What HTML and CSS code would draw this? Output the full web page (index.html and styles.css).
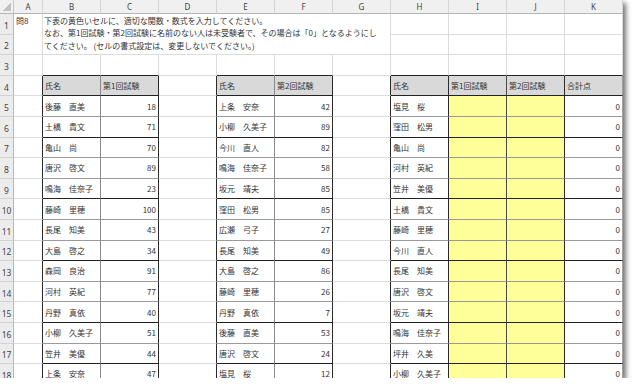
FILE: index.html
```html
<!DOCTYPE html>
<html lang="ja">
<head>
<meta charset="utf-8">
<title>問8</title>
<link rel="stylesheet" href="styles.css">
</head>
<body>
<div class="frame">
<table class="sheet">
<colgroup>
<col class="c-rh"><col class="c-a"><col class="c-std" span="10">
</colgroup>
<thead>
<tr class="r-head">
<th class="corner"></th><th class="ch">A</th><th class="ch">B</th><th class="ch">C</th><th class="ch">D</th><th class="ch">E</th><th class="ch">F</th><th class="ch">G</th><th class="ch">H</th><th class="ch">I</th><th class="ch">J</th><th class="ch">K</th>
</tr>
</thead>
<tbody>
<tr>
<th class="rh">1</th>
<td rowspan="2" class="top">問8</td>
<td colspan="6" rowspan="2" class="top note">下表の黄色いセルに、適切な関数・数式を入力してください。<br>なお、第1回試験・第2回試験に名前のない人は未受験者で、その場合は「0」となるようにし<br>てください。 (セルの書式設定は、変更しないでください。)</td>
<td></td><td></td><td></td><td></td>
</tr>
<tr>
<th class="rh">2</th>
<td></td><td></td><td></td><td></td>
</tr>
<tr>
<th class="rh">3</th>
<td></td><td class="hb"></td><td class="hb"></td><td></td><td class="hb"></td><td class="hb"></td><td></td><td class="hb"></td><td class="hb"></td><td class="hb"></td><td class="hb"></td>
</tr>
<tr class="thick">
<th class="rh">4</th>
<td class="edge"></td><td class="hd in">氏名</td><td class="hd out">第1回試験</td>
<td class="edge"></td><td class="hd in">氏名</td><td class="hd out">第2回試験</td>
<td class="edge"></td><td class="hd out">氏名</td><td class="hd mid">第1回試験</td><td class="hd out">第2回試験</td><td class="hd last">合計点</td>
</tr>
<tr class="thin">
<th class="rh">5</th>
<td class="edge"></td><td class="in">後藤　直美</td><td class="out num">18</td>
<td class="edge"></td><td class="in">上条　安奈</td><td class="out num">42</td>
<td class="edge"></td><td class="out">塩見　桜</td><td class="mid yl"></td><td class="out yl"></td><td class="last num">0</td>
</tr>
<tr class="thick">
<th class="rh">6</th>
<td class="edge"></td><td class="in">土橋　貴文</td><td class="out num">71</td>
<td class="edge"></td><td class="in">小柳　久美子</td><td class="out num">89</td>
<td class="edge"></td><td class="out">窪田　松男</td><td class="mid yl"></td><td class="out yl"></td><td class="last num">0</td>
</tr>
<tr class="thin">
<th class="rh">7</th>
<td class="edge"></td><td class="in">亀山　尚</td><td class="out num">70</td>
<td class="edge"></td><td class="in">今川　直人</td><td class="out num">82</td>
<td class="edge"></td><td class="out">亀山　尚</td><td class="mid yl"></td><td class="out yl"></td><td class="last num">0</td>
</tr>
<tr class="thin">
<th class="rh">8</th>
<td class="edge"></td><td class="in">唐沢　啓文</td><td class="out num">89</td>
<td class="edge"></td><td class="in">鳴海　佳奈子</td><td class="out num">58</td>
<td class="edge"></td><td class="out">河村　英紀</td><td class="mid yl"></td><td class="out yl"></td><td class="last num">0</td>
</tr>
<tr class="thick">
<th class="rh">9</th>
<td class="edge"></td><td class="in">鳴海　佳奈子</td><td class="out num">23</td>
<td class="edge"></td><td class="in">坂元　靖夫</td><td class="out num">85</td>
<td class="edge"></td><td class="out">笠井　美優</td><td class="mid yl"></td><td class="out yl"></td><td class="last num">0</td>
</tr>
<tr class="thin">
<th class="rh">10</th>
<td class="edge"></td><td class="in">藤崎　里穂</td><td class="out num">100</td>
<td class="edge"></td><td class="in">窪田　松男</td><td class="out num">85</td>
<td class="edge"></td><td class="out">土橋　貴文</td><td class="mid yl"></td><td class="out yl"></td><td class="last num">0</td>
</tr>
<tr class="thin">
<th class="rh">11</th>
<td class="edge"></td><td class="in">長尾　知美</td><td class="out num">43</td>
<td class="edge"></td><td class="in">広瀬　弓子</td><td class="out num">27</td>
<td class="edge"></td><td class="out">藤崎　里穂</td><td class="mid yl"></td><td class="out yl"></td><td class="last num">0</td>
</tr>
<tr class="thick">
<th class="rh">12</th>
<td class="edge"></td><td class="in">大島　啓之</td><td class="out num">34</td>
<td class="edge"></td><td class="in">長尾　知美</td><td class="out num">49</td>
<td class="edge"></td><td class="out">今川　直人</td><td class="mid yl"></td><td class="out yl"></td><td class="last num">0</td>
</tr>
<tr class="thin">
<th class="rh">13</th>
<td class="edge"></td><td class="in">森岡　良治</td><td class="out num">91</td>
<td class="edge"></td><td class="in">大島　啓之</td><td class="out num">86</td>
<td class="edge"></td><td class="out">長尾　知美</td><td class="mid yl"></td><td class="out yl"></td><td class="last num">0</td>
</tr>
<tr class="thin">
<th class="rh">14</th>
<td class="edge"></td><td class="in">河村　英紀</td><td class="out num">77</td>
<td class="edge"></td><td class="in">藤崎　里穂</td><td class="out num">26</td>
<td class="edge"></td><td class="out">唐沢　啓文</td><td class="mid yl"></td><td class="out yl"></td><td class="last num">0</td>
</tr>
<tr class="thick">
<th class="rh">15</th>
<td class="edge"></td><td class="in">丹野　真依</td><td class="out num">40</td>
<td class="edge"></td><td class="in">丹野　真依</td><td class="out num">7</td>
<td class="edge"></td><td class="out">坂元　靖夫</td><td class="mid yl"></td><td class="out yl"></td><td class="last num">0</td>
</tr>
<tr class="thin">
<th class="rh">16</th>
<td class="edge"></td><td class="in">小柳　久美子</td><td class="out num">51</td>
<td class="edge"></td><td class="in">後藤　直美</td><td class="out num">53</td>
<td class="edge"></td><td class="out">鳴海　佳奈子</td><td class="mid yl"></td><td class="out yl"></td><td class="last num">0</td>
</tr>
<tr class="thick">
<th class="rh">17</th>
<td class="edge"></td><td class="in">笠井　美優</td><td class="out num">44</td>
<td class="edge"></td><td class="in">唐沢　啓文</td><td class="out num">24</td>
<td class="edge"></td><td class="out">坪井　久美</td><td class="mid yl"></td><td class="out yl"></td><td class="last num">0</td>
</tr>
<tr class="thin">
<th class="rh">18</th>
<td class="edge"></td><td class="in">上条　安奈</td><td class="out num">47</td>
<td class="edge"></td><td class="in">塩見　桜</td><td class="out num">12</td>
<td class="edge"></td><td class="out">小柳　久美子</td><td class="mid yl"></td><td class="out yl"></td><td class="last num">0</td>
</tr>
</tbody>
</table>
</div>
</body>
</html>
```

FILE: styles.css
```css
* { box-sizing: border-box; }

body {
  margin: 0;
  background: #ffffff;
}

.frame {
  width: 623px;
  height: 378px;
  overflow: hidden;
  background: #ffffff;
  box-shadow: 3px 3px 5px rgba(0, 0, 0, 0.55);
}

.sheet {
  width: 623px;
  table-layout: fixed;
  border-collapse: separate;
  border-spacing: 0;
  font-family: "Noto Sans CJK JP", "Noto Sans", sans-serif;
  font-size: 8px;
  color: #333333;
}

.c-rh { width: 14px; }
.c-a { width: 29px; }
.c-std { width: 58px; }

.r-head { height: 14px; }
tbody tr { height: 20.6px; }

td {
  padding: 1px 2px 0 2px;
  border-right: 1px solid #dcdcdc;
  border-bottom: 1px solid #dcdcdc;
  white-space: nowrap;
  overflow: hidden;
  line-height: 10px;
  vertical-align: middle;
  text-align: left;
}

th {
  font-weight: normal;
  padding: 0;
}

.corner {
  background: #f0f0f0 linear-gradient(to bottom right, transparent 50%, #c2c2c2 50%) no-repeat right 2px bottom 2px / 9px 9px;
  border-right: 1px solid #c8c8c8;
  border-bottom: 1px solid #b4b4b4;
}

.ch {
  background: #f0f0f0;
  border-right: 1px solid #d4d4d4;
  border-bottom: 1px solid #b4b4b4;
  font-family: "Noto Sans", sans-serif;
  font-size: 8px;
  line-height: 13px;
  color: #444444;
  text-align: center;
  vertical-align: middle;
}

.rh {
  background: #ececec;
  border-right: 1px solid #b8b8b8;
  border-bottom: 1px solid #d2d2d2;
  font-family: "Noto Sans", sans-serif;
  font-size: 8.5px;
  line-height: 10px;
  color: #444444;
  text-align: center;
  vertical-align: middle;
  padding-top: 4px;
}

.top {
  vertical-align: top;
  line-height: 12.3px;
  padding-top: 1px;
}

.note {
  padding-left: 1px;
}

.hb { border-bottom-color: #222222; }

.edge { border-right-color: #2a2a2a; }

.in { border-right-color: #8a8a8a; }
.out { border-right-color: #2a2a2a; }
.mid { border-right-color: #4a4a4a; }
.last { border-right-color: #a0a0a0; }

.thin .in, .thin .out, .thin .mid, .thin .last { border-bottom-color: #9a9a9a; }
.thick .in, .thick .out, .thick .mid, .thick .last { border-bottom-color: #222222; }

.hd { background: #d9d9d9; }
.yl { background: #ffff99; }

.num {
  text-align: right;
  padding-right: 2px;
}
```
